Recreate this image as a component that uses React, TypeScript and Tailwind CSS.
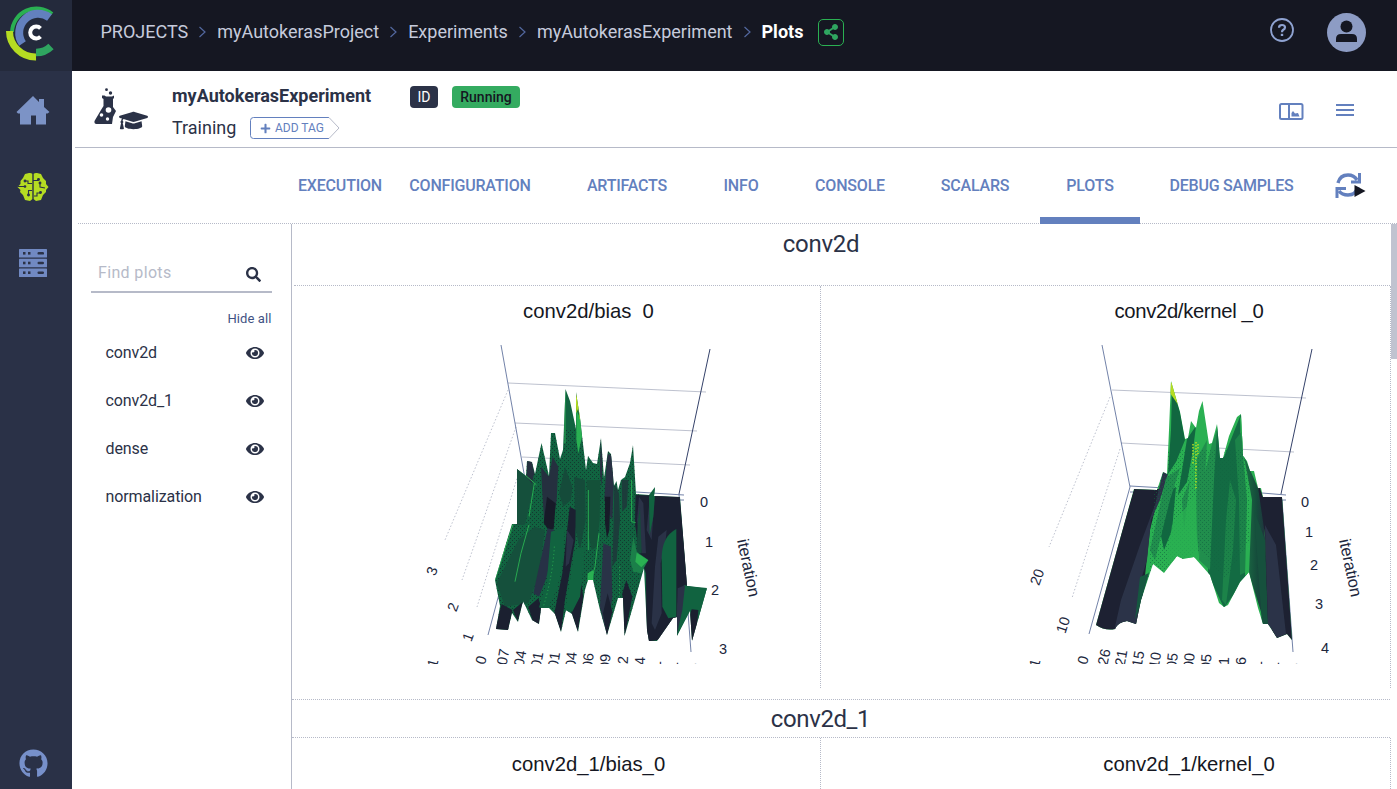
import type { ReactNode } from "react";
import { FaEye, FaGithub, FaGraduationCap, FaSearch, FaShareAlt, FaPlus } from "react-icons/fa";

function Logo() {
  return (
    <svg width="72" height="71" viewBox="0 0 72 71" fill="none">
      <path d="M52 14A24.500 24.500 0 0 0 12 32" stroke="#2ab052" strokeWidth="4" />
      <path d="M49.500 17.500A19 19 0 0 0 22.500 43.500" stroke="#6380be" strokeWidth="8" />
      <path d="M36 52.500A21 21 0 0 0 51 46.500" stroke="#2fa560" strokeWidth="7.500" />
      <path d="M9.500 31A26 26 0 0 0 36 57" stroke="#b5dc22" strokeWidth="7" />
      <path d="M40.500 28.300A6 6 0 1 0 40.500 36.700" stroke="#fff" strokeWidth="4" />
    </svg>
  );
}

function HomeIcon() {
  return (
    <svg width="34" height="32" viewBox="0 0 34 32" fill="#7c93c6">
      <path d="M0.500 17L17 1L23 7V4H28V12L33.500 17L31.500 18.500H30V29.500H20V20.500H15V29.500H4V18.500H2Z" />
    </svg>
  );
}

function BrainIcon() {
  return (
    <svg width="32" height="30" viewBox="0 0 32 30">
      <path d="M15.500 2Q14 0.500 12 1L8 2L6 6L3.500 9L3.500 12L0.500 15L3.500 18L3 20L6 23L8 28L13 29L15.500 27ZM16.500 2Q18 0.500 20 1L24 2L26 6L29 9L29 12L31.500 15L29 18L29 20L26 23L24 28L19 29L16.500 27Z" fill="#b5dc22" />
      <g stroke="#2b3247" strokeWidth="1.100" fill="#2b3247">
        <path d="M16 2V28" strokeWidth="0.800" />
        <path d="M1 14.500H7M8 9H11V11.500H15M16 8.500H21M15 18.500H11.500V23M17 24H20V21H23M23 11V15L28 16" fill="none" />
        <circle cx="8" cy="14.500" r="0.800" /><circle cx="8" cy="9" r="0.900" /><circle cx="21.500" cy="7.500" r="0.900" />
        <circle cx="11.500" cy="23" r="0.900" /><circle cx="23.500" cy="20.500" r="0.900" /><circle cx="23" cy="11" r="0.900" />
      </g>
    </svg>
  );
}

function WorkersIcon() {
  return (
    <svg width="28" height="28" viewBox="0 0 28 28">
      {[0, 9.700, 19.400].map((y) => (
        <g key={y}>
          <rect x="0" y={y} width="28" height="8.600" rx="0.500" fill="#7189c2" />
          <rect x="4" y={y + 3} width="2.500" height="2.600" fill="#2b3247" />
          <rect x="9" y={y + 3} width="2.500" height="2.600" fill="#2b3247" />
          <rect x="18.500" y={y + 3} width="6.500" height="2.600" rx="1.200" fill="#2b3247" />
        </g>
      ))}
    </svg>
  );
}

function FlaskIcon() {
  return (
    <svg width="24" height="38" viewBox="0 0 24 38">
      <g fill="#2b3247">
        <circle cx="12.500" cy="1.700" r="1.400" />
        <circle cx="16.500" cy="5" r="1.700" />
        <path d="M8 7.500H10.500L12 8.500H18L20 7.500V10L19 11V19L22 23L19 29L18 36H2.500Q0 36 0.500 33L7 22L9.500 18V11L8 10Z" />
      </g>
      <g fill="#fff">
        <circle cx="14.500" cy="22" r="2.800" />
        <circle cx="7.500" cy="27" r="1.800" />
        <circle cx="13.500" cy="31" r="1.700" />
      </g>
    </svg>
  );
}

const crumbs = ["PROJECTS", "myAutokerasProject", "Experiments", "myAutokerasExperiment"];

function Chevron() {
  return (
    <svg width="7" height="12" viewBox="0 0 7 12" fill="none" stroke="#53689f" strokeWidth="1.200">
      <path d="M0.500 1L6 6L0.500 11" />
    </svg>
  );
}

function TopBar() {
  return (
    <header className="flex h-[71px] items-start bg-[#151722]">
      <nav className="flex h-[64px] items-center pl-[28.500px] text-[18px] text-[#c6cbdc]">
        {crumbs.map((c) => (
          <div key={c} className="flex items-center">
            <span className="pb-[2px]">{c}</span>
            <span className="mx-[11px]"><Chevron /></span>
          </div>
        ))}
        <span className="pb-[2px] font-bold text-white">Plots</span>
        <span className="ml-[15px] flex h-[27px] w-[26px] items-center justify-center rounded-[5px] border border-[#2ab052] text-[#2fa560]">
          <FaShareAlt size={16} />
        </span>
      </nav>
      <div className="ml-auto flex items-start pr-[31px]">
        <svg className="mt-[18px] mr-[33px]" width="24" height="24" viewBox="0 0 24 24" fill="none" stroke="#8fa3d2">
          <circle cx="12" cy="12" r="11" strokeWidth="1.800" />
          <path d="M9 9.700Q9 7 12 7Q15 7 15 9.400Q15 10.800 13 12Q12 12.700 12 14.200" strokeWidth="2.200" />
          <path d="M12 15.800V18" strokeWidth="2.400" />
        </svg>
        <svg className="mt-[13px]" width="39" height="39" viewBox="0 0 39 39">
          <circle cx="19.500" cy="19.500" r="19.500" fill="#8d9cc4" />
          <circle cx="19.500" cy="13.500" r="6" fill="#151722" />
          <path d="M9 29V26Q9 21 14 21H25Q30 21 30 26V29Z" fill="#151722" />
        </svg>
      </div>
    </header>
  );
}

function InfoBar() {
  return (
    <section className="ml-[3px] flex h-[77px] border-b border-[#b6bac8] pl-[19px] text-[#2b3247]">
      <div className="flex w-[78px] pt-[17px]">
        <FlaskIcon />
        <FaGraduationCap size={29} className="mt-[18px] ml-[1px]" />
      </div>
      <div className="flex flex-col pt-[12px]">
        <div className="flex h-[28px] items-center">
          <span className="w-[238px] pb-[3px] text-[18px] font-bold">myAutokerasExperiment</span>
          <span className="flex h-[22px] w-[28px] items-center justify-center rounded-[4px] bg-[#2b3247] text-[14px] text-white">ID</span>
          <span className="ml-[14px] flex h-[22px] w-[68px] items-center justify-center rounded-[4px] bg-[#34ab60] text-[14px] font-medium text-[#151722]">Running</span>
        </div>
        <div className="flex h-[34px] items-center">
          <span className="w-[78px] pb-[2px] text-[18px]">Training</span>
          <span className="relative flex h-[22px] w-[90px] items-center text-[#6380be]">
            <svg className="absolute inset-0" width="90" height="22" viewBox="0 0 90 22" fill="none">
              <path d="M79 0.500H3.500Q0.500 0.500 0.500 3.500V18.500Q0.500 21.500 3.500 21.500H79" stroke="#6380be" />
              <path d="M79 0.500L89 11L79 21.500" stroke="#b6bac8" />
            </svg>
            <FaPlus size={11} className="ml-[10px]" />
            <span className="ml-[4px] text-[12px]">ADD TAG</span>
          </span>
        </div>
      </div>
      <div className="ml-auto flex pr-[43px]">
        <svg className="mt-[32px] mr-[32px]" width="25" height="17" viewBox="0 0 25 17" fill="none" stroke="#6380be" strokeWidth="2">
          <rect x="1" y="1" width="22.500" height="15" rx="1.500" />
          <path d="M10 1V16" />
          <path d="M12.500 13.500V10L14 8L16 10.500L19 10L20.500 13.500Z" fill="#6380be" stroke="none" />
        </svg>
        <svg className="mt-[32px]" width="18" height="13" viewBox="0 0 18 13" stroke="#6380be" strokeWidth="2">
          <path d="M0 2H18M0 7H18M0 12H18" />
        </svg>
      </div>
    </section>
  );
}

const tabs = [
  { label: "EXECUTION", width: "w-[76px]" },
  { label: "CONFIGURATION", width: "w-[184px]" },
  { label: "ARTIFACTS", width: "w-[130px]" },
  { label: "INFO", width: "w-[98px]" },
  { label: "CONSOLE", width: "w-[120px]" },
  { label: "SCALARS", width: "w-[130px]" },
  { label: "PLOTS", width: "w-[100px]", active: true },
  { label: "DEBUG SAMPLES", width: "w-[183px]" },
];

function Tabs() {
  return (
    <section className="ml-[6px] flex h-[76px] border-b border-dotted border-[#b6bac8] pl-[224px] text-[16px] font-medium tracking-[-0.2px] text-[#6380be]">
      {tabs.map((t) => (
        <div key={t.label} className={`${t.width} flex h-[76px] shrink-0 flex-col items-center whitespace-nowrap`}>
          <span className="flex h-[69px] items-center pt-[6px]">{t.label}</span>
          {t.active && <span className="h-[7px] w-full bg-[#6380be]" />}
        </div>
      ))}
      <svg className="mt-[24px] ml-[12px] shrink-0" width="31" height="27" viewBox="0 0 31 27" fill="none" stroke="#6380be" strokeWidth="3.500">
        <path d="M3 11Q5 3 13 3Q19 3 22 8" />
        <path d="M24.500 1V10H16" strokeWidth="3" />
        <path d="M23 15Q21 23 13 23Q7 23 4 19" />
        <path d="M2 26V16.500H11" strokeWidth="3" />
        <path d="M19.500 13L30.500 19L19.500 25Z" fill="#151722" stroke="none" />
      </svg>
    </section>
  );
}

function FilterPanel() {
  return (
    <aside className="flex w-[220px] shrink-0 flex-col border-r border-[#b6bac8] text-[#2b3247]">
      <div className="mt-[29px] mr-[19px] ml-[19px] flex h-[40px] items-center border-b-2 border-[#b6bac8] pr-[11.500px] pl-[7px]">
        <span className="pt-[2px] text-[16px] tracking-[0.35px] text-[#b6bac8]">Find plots</span>
        <FaSearch size={15} className="mt-[4px] ml-auto" />
      </div>
      <span className="mt-[16px] mr-[19.500px] text-right text-[13px] leading-[20px] tracking-[0.1px] text-[#3f5284]">Hide all</span>
      {["conv2d", "conv2d_1", "dense", "normalization"].map((p) => (
        <div key={p} className="flex h-[48px] items-center pr-[27px] pl-[33.500px] text-[16px] tracking-[-0.1px]">
          <span>{p}</span>
          <FaEye size={18} className="mb-px ml-auto" />
        </div>
      ))}
    </aside>
  );
}

type Tick = [string, number, number, number];

function TickLabels({ ticks }: { ticks: Tick[] }) {
  return (
    <g fill="#20263c" fontFamily="Liberation Sans, sans-serif" fontSize="14.500" textAnchor="middle">
      {ticks.map(([t, x, y, r], i) => (
        <text key={i} transform={`translate(${x} ${y}) rotate(${r})`} y="5">{t}</text>
      ))}
    </g>
  );
}

const biasTicks: Tick[] = [
  ["0", 704, 502, 0], ["1", 709, 542, 0], ["2", 715, 590, 0], ["3", 723, 649, 0],
  ["3", 432, 571, -70], ["2", 453, 607, -70], ["1", 468, 637, -70], ["0", 481, 660, -75],
  ["-1", 432, 665.500, -75], ["07", 503, 657, -80], ["04", 520, 658.500, -80], ["01", 537, 660, -80], ["01", 554, 660, -82],
  ["04", 571, 660, -84], ["06", 588, 661, -85], ["09", 605, 662, -87], ["2", 623, 660, -88], ["4", 640, 661, -90],
  ["1", 656, 665, -90], ["1", 673, 666, -90], ["1", 691, 667, -90],
];

const kernelTicks: Tick[] = [
  ["0", 1305, 502, 0], ["1", 1309, 532, 0], ["2", 1314, 565, 0], ["3", 1319, 604, 0], ["4", 1325, 648, 0],
  ["20", 1037, 577, -70], ["10", 1063, 625, -72], ["0", 1083, 660, -75], ["-1", 1034, 665.500, -75],
  ["26", 1104, 657, -78], ["21", 1121, 658, -80], ["15", 1138, 659, -80], ["10", 1155, 660, -82],
  ["05", 1172, 661, -84], ["00", 1189, 661, -85], ["05", 1206, 662, -87], ["1", 1224, 661, -88], ["6", 1241, 661, -90],
  ["1", 1257, 665, -90], ["1", 1274, 666, -90], ["1", 1292, 667, -90],
];

function BiasSurface() {
  return (
    <svg className="block" width="527" height="339" viewBox="293 325 527 339" fill="none">
      <defs>
        <clipPath id="biasClip">
          <path d="M496 629L500 606L495 580L512 524H517V469L526 476L527 461L532 462L535 474L541.500 443L549 476L551 433H555L560 459L563 450L565.500 389L570 401L576 429V392L580 418L586 470L588 456L593 463L597 464L601 438L604 478L608 451L611 454L614 486L616.500 481L618 490L621 480L625 477L630 463L633 445L636 494L649 495L655 487L654 496L680 497L687 586L707 588L692 641L690 611L677 636V617L673 618L657 641H649L647 630L644 568L624.500 636L623 598H618L607 635L600 610L593 580H588L585 590L578 632L572 614L566 610L561 632L555 614L549 608H541L539 624L532 620L523 601L518 622L512 613L508 630Z" />
        </clipPath>
        <pattern id="biasDots" width="4" height="4" patternUnits="userSpaceOnUse">
          <path d="M0 0H1V1H0ZM2 2H3V3H2Z" fill="#151722" />
        </pattern>
        <pattern id="navyDither" width="2" height="2" patternUnits="userSpaceOnUse">
          <path d="M0 0H1V1H0ZM1 1H2V2H1Z" fill="#1c2233" />
        </pattern>
      </defs>
      <g stroke="#b6bac8" strokeWidth="0.900">
        <path d="M508 383L706 392M515 423L697 431M522 457L690 465" />
        <path d="M508 390L445 540M516 427L462 580M519 472L477 607" strokeDasharray="1.500 2" />
      </g>
      <g stroke="#4e6292">
        <path d="M501 345L527 490L488 635M636 492L684 495M680 500H684M679 494L691 652" strokeWidth="0.800" />
        <path d="M710 349L679 494" stroke="#35426a" />
      </g>
      <g clipPath="url(#biasClip)">
        <rect x="490" y="380" width="220" height="265" fill="#116340" />
        <rect x="490" y="430" width="150" height="206" fill="url(#biasDots)" opacity=".55" />
        <g transform="translate(485 380) scale(.33333)">
          <path d="M95 265L120 285L150 300L120 435H95ZM100 480L150 440L180 450L160 590L130 670L60 680L35 610Z" fill="#15503c" />
          <path d="M127 240L140 245L148 280L140 310L125 290ZM168 260L192 290L203 230L220 260L215 360L200 450L178 430L172 340Z" fill="#25303f" />
          <path d="M186 350L212 370L206 448L190 450L176 428Z" fill="#171a28" />
          <path d="M188 445L207 450L203 520L182 600L162 650L145 640L160 570Z" fill="#273146" />
          <path d="M50 672L82 690L70 750H30ZM84 690L114 665L98 724ZM130 680L160 655L172 690L160 735L145 728Z" fill="#1b2030" />
          <path d="M240 260L262 320L258 360L235 380L222 340ZM268 290L300 300L302 420L285 510L270 440Z" fill="#154b3a" />
          <path d="M254 380L272 390L271 480L250 600L239 665L228 757L208 700L232 580Z" fill="#1b2031" />
          <path d="M246 450L266 480L252 550L242 560Z" fill="#2a3247" />
          <path d="M305 300L346 300L344 420L335 500L320 510L305 440Z" fill="#145139" />
          <path d="M347 175L352 240L350 320L345 280ZM368 220L382 230L386 320L382 420L370 400L358 360L362 290Z" fill="#283043" />
          <path d="M360 350H376L373 450L366 475L360 430Z" fill="#171a28" />
          <path d="M355 490L378 500L382 650L366 768L345 680Z" fill="#293347" />
          <path d="M388 310L402 340L405 420L395 540L382 560L386 420ZM410 300L430 300L426 380L412 395Z" fill="#1c3d3b" />
          <path d="M412 640L424 600L442 650L419 770ZM280 560L295 650L278 755L258 695ZM354 700L366 768L382 695L368 640Z" fill="#1b2031" />
          <path d="M452 345L584 350L610 630L575 770L485 785L483 580L462 520L450 430Z" fill="#1b1f2f" />
          <path d="M452 345L584 350L610 630L575 770L485 785L483 580L462 520L450 430Z" fill="url(#navyDither)" />
          <path d="M462 350L475 370L483 520L470 520L456 420ZM495 345L485 450L500 480L506 390ZM520 470L545 450L540 500L527 550L530 700L510 750L500 730L510 560Z" fill="#2a3247" />
          <path d="M512 320L505 410L494 465L492 350Z" fill="#116340" />
          <path d="M465 380L470 520L455 520L458 430Z" fill="#154b3a" />
          <path d="M530 535Q530 470 574 447V710L550 715L532 680Z" fill="#116340" />
          <path d="M597 615L668 627L640 720L615 690L574 770L578 670Z" fill="#116340" />
          <path d="M578 625L600 616L592 690L574 770Z" fill="#2a3247" />
          <path d="M620 688L640 690L632 780H615L610 720Z" fill="#1b1f2f" />
          <path d="M198 455L240 440L233 550L215 630L185 690L162 682L185 610ZM270 508L300 500L292 590L285 650L262 695L240 695L255 600Z" fill="#116340" />
          <path d="M445 470L455 515L490 540L468 580L445 575L435 540Z" fill="#1b7f49" />
          <path d="M455 518L490 541L469 562L451 545ZM274 90L288 120L291 170L280 220L274 180ZM308 580L325 570V605H307Z" fill="#2ab052" />
          <path d="M272 35L281 75L290 120L284 118L280 85L274 100Z" fill="#b5dc22" />
          <path d="M84 433L30 600M132 434Q105 520 90 605M440 300V425L452 428M342 460L330 560L319 603M240 35V190M97 265L155 315M148 310L132 410M310 330V510" stroke="#2ab052" strokeWidth="2.800" />
          <path d="M208 500Q203 590 175 680M404 560V650" stroke="#2ab052" strokeWidth="3" strokeDasharray="3 8" />
        </g>
      </g>
      <TickLabels ticks={biasTicks} />
      <text transform="translate(748 568) rotate(78)" y="5" fill="#20263c" fontFamily="Liberation Sans, sans-serif" fontSize="16.500" textAnchor="middle">iteration</text>
    </svg>
  );
}

function KernelSurface() {
  return (
    <svg className="block" width="569" height="339" viewBox="821 325 569 339" fill="none">
      <defs>
        <clipPath id="kernelClip">
          <path d="M1096 625L1134 489L1157 490L1163 472L1167 474L1169 430L1171 381L1180 412L1185 439L1188 438L1191 421L1196 428L1199 411L1202.500 401L1209 444L1212 443L1217 424L1220 458H1223L1229 436L1237 417L1241 414L1243 456L1247 461L1250 471H1254L1258 488H1261L1263 497H1282L1292 640L1287 634L1277 638L1268 624H1263L1258 608L1249 572L1240 582L1228 605L1224 607L1219 603L1210 575L1194 557L1183 559L1177 556L1164 573L1153 564L1141 600L1136 624L1127 621Q1118 622 1115 629Q1105 631 1096 625Z" />
        </clipPath>
        <pattern id="kernelDots" width="4" height="4" patternUnits="userSpaceOnUse">
          <path d="M0 0H1V1H0ZM2 2H3V3H2Z" fill="#116340" />
        </pattern>
        <linearGradient id="rightSlope" x1="1244" x2="1266" y1="0" y2="0" gradientUnits="userSpaceOnUse">
          <stop offset="0" stopColor="#1c7045" />
          <stop offset=".6" stopColor="#154b3b" />
          <stop offset="1" stopColor="#22313f" />
        </linearGradient>
      </defs>
      <g stroke="#b6bac8" strokeWidth="0.900">
        <path d="M1112 390L1306 398M1121 443L1294 452" />
        <path d="M1110 397L1049 547M1120 449L1072 598" strokeDasharray="1.500 2" />
      </g>
      <g stroke="#4e6292">
        <path d="M1102 345L1130 487L1089 634M1130 486L1165 488M1130 492H1135M1262 493L1286 495M1282 500H1286M1282 500L1293 652" strokeWidth="0.800" />
        <path d="M1312 349L1281 494" stroke="#35426a" />
      </g>
      <g clipPath="url(#kernelClip)">
        <rect x="1090" y="380" width="210" height="262" fill="#2ab052" />
        <path d="M1134 489H1160L1150 530L1138 640H1090Z" fill="#1d2132" />
        <path d="M1163 472L1168 474L1160 500L1151 520L1147 560L1141 580L1136 640H1112L1121 600L1140 545L1155 505Z" fill="#2b3348" />
        <path d="M1172 387L1180 412L1185 440L1176 462L1168 474L1171 430ZM1187 439L1196 426L1193 450L1187 482L1178 495ZM1170 490L1176 487L1172 530L1164 550L1161 536Z" fill="#116740" />
        <path d="M1197 458L1207 440L1204 500L1199 556L1196 530ZM1166 478L1180 468L1170 500L1155 560L1150 550ZM1182 500L1190 480L1184 530Z" fill="#218e4d" />
        <path d="M1213 450L1218 424L1220 458L1224 457L1241 414L1240 440L1243 500L1245 560L1247 576L1224 608L1208 574L1210 520Z" fill="#136b43" />
        <path d="M1212 444L1217 430L1214 480L1210 570L1199 560L1203 480Z" fill="#218e4d" />
        <path d="M1230 480L1226 520L1222 600L1226 605L1233 550L1236 500ZM1235 440L1243 430L1249 520L1246 572L1240 575L1239 500Z" fill="#1c8349" />
        <path d="M1240 419L1242 414L1245 464L1251 495L1249 573L1245 576L1247 500Z" fill="#2ab052" />
        <path d="M1244 456L1258 488L1263 500L1270 640L1249 574L1252 500Z" fill="url(#rightSlope)" />
        <path d="M1254 510L1265 540L1268 625H1262Z" fill="#16513d" />
        <path d="M1257 480L1263 497H1283L1293 641H1276L1268 620L1265 535Z" fill="#1d2132" />
        <path d="M1265 525L1276 545L1286 634L1277 638L1268 624Z" fill="#2b3348" />
        <path d="M1140 577L1149 573L1141 602L1135 620Z" fill="#155840" />
        <path d="M1170 381L1173 384L1179 406L1170 393Z" fill="#b5dc22" />
        <path d="M1196 442V490M1193 444V465M1198 444V455" stroke="#b5dc22" strokeWidth="1.500" strokeDasharray="1.500 1.500" />
        <path d="M1157 450H1250V540L1225 580L1200 550L1148 580Z" fill="url(#kernelDots)" opacity=".6" />
        <path d="M1172 525L1196 495L1198 558H1180L1166 565Z" fill="#2ab052" opacity=".75" />
      </g>
      <TickLabels ticks={kernelTicks} />
      <text transform="translate(1350 568) rotate(78)" y="5" fill="#20263c" fontFamily="Liberation Sans, sans-serif" fontSize="16.500" textAnchor="middle">iteration</text>
    </svg>
  );
}

const chartTitle = "text-center font-['Liberation_Sans',sans-serif] text-[20.3px] leading-[24px] text-[#151722] whitespace-pre";

function Cell({ title, className, titleShift, children }: { title: string; className: string; titleShift: string; children?: ReactNode }) {
  return (
    <div className={`${className} shrink-0 overflow-hidden border-r border-dotted border-[#b6bac8]`}>
      <h3 className={`${chartTitle} ${titleShift}`}>{title}</h3>
      {children}
    </div>
  );
}

function Plots() {
  return (
    <main className="flex min-w-0 flex-1 flex-col overflow-hidden">
      <div className="mr-[7px] ml-[2px] flex h-[62px] shrink-0 justify-center border-b border-dotted border-[#b6bac8] pt-[6px] pr-[42px] text-[24px] leading-[28px] tracking-[-0.3px] text-[#2b3247]">conv2d</div>
      <div className="flex h-[402px] shrink-0 pl-px">
        <Cell title="conv2d/bias  0" className="w-[528px]" titleShift="mt-[13px] pb-[2px] pl-[64px]">
          <BiasSurface />
        </Cell>
        <Cell title="conv2d/kernel _0" className="w-[570px]" titleShift="mt-[13px] pb-[2px] pl-[167px] tracking-[-0.35px]">
          <KernelSurface />
        </Cell>
      </div>
      <div className="mt-[11px] mr-[7px] flex h-[39px] shrink-0 justify-center border-y border-dotted border-[#b6bac8] pt-[5px] pr-[41px] text-[24px] leading-[28px] tracking-[-0.4px] text-[#2b3247]">conv2d_1</div>
      <div className="flex flex-1 pl-px">
        <Cell title="conv2d_1/bias_0" className="w-[528px]" titleShift="mt-[14px] pl-[64px]" />
        <Cell title="conv2d_1/kernel_0" className="w-[570px]" titleShift="mt-[14px] pl-[167px]" />
      </div>
    </main>
  );
}

export default function App() {
  return (
    <div className="flex h-[789px] w-[1397px] overflow-hidden bg-white font-['Roboto',sans-serif]">
      <aside className="flex w-[72px] shrink-0 flex-col bg-[#2a3147]">
        <div className="h-[71px] bg-[#242a3c]"><Logo /></div>
        <div className="mt-[24px] ml-[16px]"><HomeIcon /></div>
        <div className="mt-[45px] ml-[17px]"><BrainIcon /></div>
        <div className="mt-[47px] ml-[19px]"><WorkersIcon /></div>
        <FaGithub size={29} className="mt-auto mb-[11px] ml-[19px] text-[#7790ca]" />
      </aside>
      <div className="flex min-w-0 flex-1 flex-col">
        <TopBar />
        <InfoBar />
        <Tabs />
        <div className="flex min-h-0 flex-1">
          <FilterPanel />
          <Plots />
          <div className="-ml-[6px] h-[135px] w-[6px] shrink-0 bg-[#c0c3d0]" />
        </div>
      </div>
    </div>
  );
}
